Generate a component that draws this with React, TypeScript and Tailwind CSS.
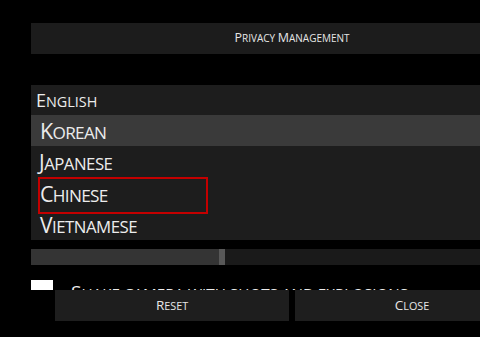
import React from "react";

const langs = [
  { name: "English", h: "h-[30px]", size: "text-[18px]", pl: "pl-[5px]", bg: "" },
  { name: "Korean", h: "h-[31px]", size: "text-[21.5px] tracking-[-0.7px]", pl: "pl-[9px]", bg: "bg-[#3a3a3a]" },
  { name: "Japanese", h: "h-[32px]", size: "text-[21px] tracking-[-0.5px]", pl: "pl-[8px]", bg: "" },
  { name: "Chinese", h: "h-[32px]", size: "text-[21.5px] tracking-[-0.7px]", pl: "pl-[9px]", bg: "" },
  { name: "Vietnamese", h: "h-[30px]", size: "text-[21px] tracking-[-0.5px]", pl: "pl-[9px]", bg: "" },
];

// game-menu style small caps: capitals full size, lowercase as smaller capitals
function Caps({ text }: { text: string }) {
  const parts: { big: boolean; s: string }[] = [];
  for (const ch of text) {
    const big = ch !== ch.toLowerCase();
    const last = parts[parts.length - 1];
    if (last && last.big === big) last.s += ch;
    else parts.push({ big, s: ch });
  }
  return (
    <span className="uppercase">
      {parts.map((p, i) => (
        <span key={i} className={p.big ? "" : "text-[0.8em]"}>
          {p.s}
        </span>
      ))}
    </span>
  );
}

export default function App() {
  return (
    <div
      className="relative w-[480px] h-[337px] overflow-hidden bg-black text-[#ececec]"
      style={{ fontFamily: '"Open Sans", "Noto Sans", sans-serif' }}
    >
      <div className="w-[522px] ml-[31px] flex flex-col">
        <div className="mt-[23px] h-[31px] bg-[#1c1c1c] flex items-center justify-center text-[12.5px] text-[#e6e6e6]">
          <Caps text="Privacy Management" />
        </div>
        <div className="mt-[31px] bg-[#1d1d1d] flex flex-col relative">
          {langs.map((l) => (
            <div key={l.name} className={`${l.h} ${l.bg} ${l.pl} ${l.size} flex items-center leading-none`}>
              <Caps text={l.name} />
            </div>
          ))}
          <div className="absolute left-[7px] top-[92px] w-[170px] h-[37px] border-2 border-[#c40000]" />
        </div>
        <div className="mt-[9px] h-[16px] flex bg-[#1a1a1a]">
          <div className="w-[188px] bg-[#343434]" />
          <div className="w-[6px] bg-[#585858]" />
        </div>
        <div className="mt-[15px] h-[10px] overflow-hidden flex items-start gap-[18px]">
          <div className="w-[22px] h-[14px] shrink-0 bg-white" />
          <div className="text-[19px] leading-none mt-[3px] whitespace-nowrap">
            <Caps text="Shake camera with shots and explosions" />
          </div>
        </div>
      </div>
      <div className="absolute left-[55px] top-[290px] w-[474px] h-[31px] flex gap-[6px] text-[13.5px] text-[#e6e6e6]">
        <div className="w-[234px] bg-[#1e1e1e] flex items-center justify-center">
          <Caps text="Reset" />
        </div>
        <div className="flex-1 bg-[#1e1e1e] flex items-center justify-center">
          <Caps text="Close" />
        </div>
      </div>
    </div>
  );
}
